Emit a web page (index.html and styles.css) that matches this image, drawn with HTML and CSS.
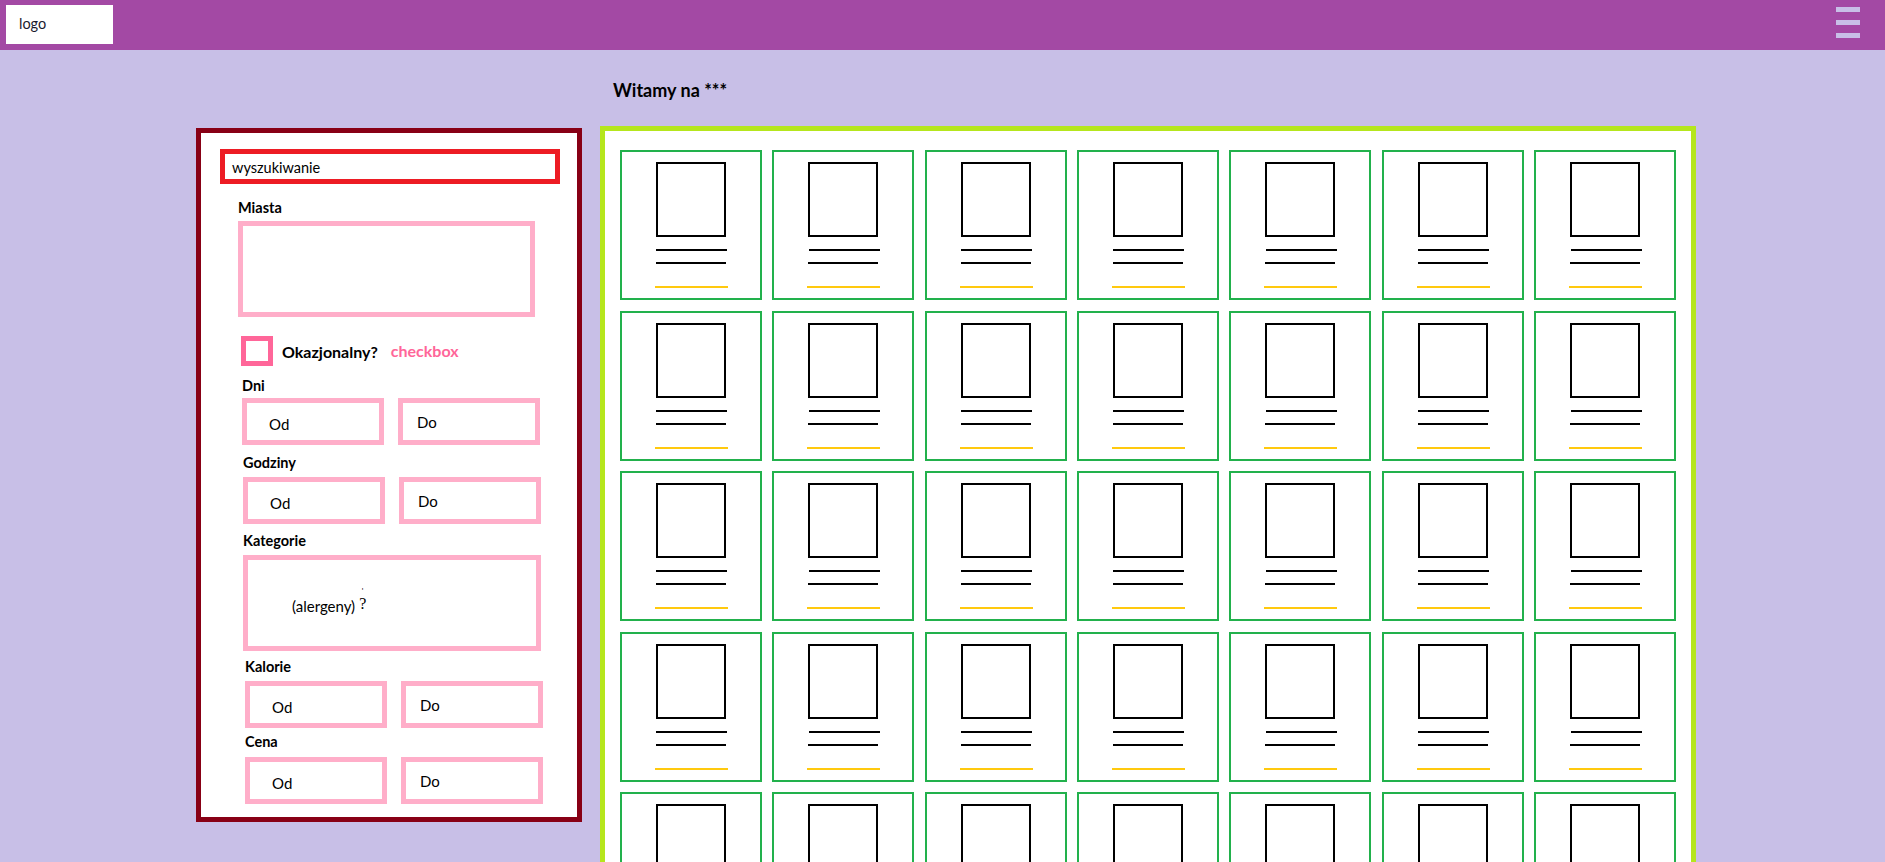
FILE: index.html
```html
<!DOCTYPE html>
<html lang="pl">
<head>
<meta charset="utf-8">
<title>Witamy na ***</title>
<link rel="stylesheet" href="styles.css">
</head>
<body>
<header class="topbar">
  <div class="logo">logo</div>
  <div class="burger"><span></span><span></span><span></span></div>
</header>
<div class="page">
  <aside class="sidebar">
    <div class="search">wyszukiwanie</div>

    <div class="field f-miasta">
      <div class="label">Miasta</div>
      <div class="bigbox"></div>
    </div>

    <div class="check-row">
      <div class="checkbox"></div>
      <span class="check-label">Okazjonalny?</span>
      <span class="check-note">checkbox</span>
    </div>

    <div class="field f-dni">
      <div class="label">Dni</div>
      <div class="pair"><div class="box od">Od</div><div class="box do">Do</div></div>
    </div>

    <div class="field f-godziny">
      <div class="label">Godziny</div>
      <div class="pair"><div class="box od">Od</div><div class="box do">Do</div></div>
    </div>

    <div class="field f-kategorie">
      <div class="label">Kategorie</div>
      <div class="bigbox kat"><span class="kat-text">(alergeny)</span><span class="q"><span class="tick">'</span>?</span></div>
    </div>

    <div class="field f-kalorie">
      <div class="label">Kalorie</div>
      <div class="pair"><div class="box od">Od</div><div class="box do">Do</div></div>
    </div>

    <div class="field f-cena">
      <div class="label">Cena</div>
      <div class="pair"><div class="box od">Od</div><div class="box do">Do</div></div>
    </div>
  </aside>

  <main class="main">
    <h1 class="title">Witamy na ***</h1>
    <section class="panel">
      <div class="grid">
        <div class="card"><div class="pic"></div><div class="ln l1"></div><div class="ln l2"></div><div class="ln price"></div></div>
        <div class="card"><div class="pic"></div><div class="ln l1"></div><div class="ln l2"></div><div class="ln price"></div></div>
        <div class="card"><div class="pic"></div><div class="ln l1"></div><div class="ln l2"></div><div class="ln price"></div></div>
        <div class="card"><div class="pic"></div><div class="ln l1"></div><div class="ln l2"></div><div class="ln price"></div></div>
        <div class="card"><div class="pic"></div><div class="ln l1"></div><div class="ln l2"></div><div class="ln price"></div></div>
        <div class="card"><div class="pic"></div><div class="ln l1"></div><div class="ln l2"></div><div class="ln price"></div></div>
        <div class="card"><div class="pic"></div><div class="ln l1"></div><div class="ln l2"></div><div class="ln price"></div></div>

        <div class="card"><div class="pic"></div><div class="ln l1"></div><div class="ln l2"></div><div class="ln price"></div></div>
        <div class="card"><div class="pic"></div><div class="ln l1"></div><div class="ln l2"></div><div class="ln price"></div></div>
        <div class="card"><div class="pic"></div><div class="ln l1"></div><div class="ln l2"></div><div class="ln price"></div></div>
        <div class="card"><div class="pic"></div><div class="ln l1"></div><div class="ln l2"></div><div class="ln price"></div></div>
        <div class="card"><div class="pic"></div><div class="ln l1"></div><div class="ln l2"></div><div class="ln price"></div></div>
        <div class="card"><div class="pic"></div><div class="ln l1"></div><div class="ln l2"></div><div class="ln price"></div></div>
        <div class="card"><div class="pic"></div><div class="ln l1"></div><div class="ln l2"></div><div class="ln price"></div></div>

        <div class="card"><div class="pic"></div><div class="ln l1"></div><div class="ln l2"></div><div class="ln price"></div></div>
        <div class="card"><div class="pic"></div><div class="ln l1"></div><div class="ln l2"></div><div class="ln price"></div></div>
        <div class="card"><div class="pic"></div><div class="ln l1"></div><div class="ln l2"></div><div class="ln price"></div></div>
        <div class="card"><div class="pic"></div><div class="ln l1"></div><div class="ln l2"></div><div class="ln price"></div></div>
        <div class="card"><div class="pic"></div><div class="ln l1"></div><div class="ln l2"></div><div class="ln price"></div></div>
        <div class="card"><div class="pic"></div><div class="ln l1"></div><div class="ln l2"></div><div class="ln price"></div></div>
        <div class="card"><div class="pic"></div><div class="ln l1"></div><div class="ln l2"></div><div class="ln price"></div></div>

        <div class="card"><div class="pic"></div><div class="ln l1"></div><div class="ln l2"></div><div class="ln price"></div></div>
        <div class="card"><div class="pic"></div><div class="ln l1"></div><div class="ln l2"></div><div class="ln price"></div></div>
        <div class="card"><div class="pic"></div><div class="ln l1"></div><div class="ln l2"></div><div class="ln price"></div></div>
        <div class="card"><div class="pic"></div><div class="ln l1"></div><div class="ln l2"></div><div class="ln price"></div></div>
        <div class="card"><div class="pic"></div><div class="ln l1"></div><div class="ln l2"></div><div class="ln price"></div></div>
        <div class="card"><div class="pic"></div><div class="ln l1"></div><div class="ln l2"></div><div class="ln price"></div></div>
        <div class="card"><div class="pic"></div><div class="ln l1"></div><div class="ln l2"></div><div class="ln price"></div></div>

        <div class="card"><div class="pic"></div><div class="ln l1"></div><div class="ln l2"></div><div class="ln price"></div></div>
        <div class="card"><div class="pic"></div><div class="ln l1"></div><div class="ln l2"></div><div class="ln price"></div></div>
        <div class="card"><div class="pic"></div><div class="ln l1"></div><div class="ln l2"></div><div class="ln price"></div></div>
        <div class="card"><div class="pic"></div><div class="ln l1"></div><div class="ln l2"></div><div class="ln price"></div></div>
        <div class="card"><div class="pic"></div><div class="ln l1"></div><div class="ln l2"></div><div class="ln price"></div></div>
        <div class="card"><div class="pic"></div><div class="ln l1"></div><div class="ln l2"></div><div class="ln price"></div></div>
        <div class="card"><div class="pic"></div><div class="ln l1"></div><div class="ln l2"></div><div class="ln price"></div></div>
      </div>
    </section>
  </main>
</div>
</body>
</html>
```

FILE: styles.css
```css
* { box-sizing: border-box; }

html, body {
  margin: 0;
  padding: 0;
  height: 100%;
  overflow: hidden;
}

body {
  background: #c8bfe7;
  font-family: Lato, "Open Sans", sans-serif;
  color: #000;
}

/* ---------- top bar ---------- */
.topbar {
  height: 50px;
  background: #a349a4;
  display: flex;
  align-items: flex-start;
  justify-content: space-between;
  padding: 5px 25px 0 6px;
}

.logo {
  width: 107px;
  height: 39px;
  background: #fff;
  font-size: 14.5px;
  line-height: 18px;
  padding: 10px 0 0 13px;
  color: #1a1a2e;
}

.burger {
  display: flex;
  flex-direction: column;
  gap: 8px;
  margin-top: 2px;
}
.burger span {
  display: block;
  width: 24px;
  height: 5px;
  background: #c8bfe7;
}

/* ---------- page layout ---------- */
.page {
  display: flex;
  align-items: flex-start;
  gap: 18px;
  padding-left: 196px;
}

/* ---------- sidebar ---------- */
.sidebar {
  width: 386px;
  height: 694px;
  margin-top: 78px;
  background: #fff;
  border: 5px solid #880015;
  padding: 16px 0 0 19px;
  flex: none;
}

.search {
  width: 340px;
  height: 35px;
  border: 5px solid #ed1c24;
  font-size: 14.5px;
  line-height: 22px;
  padding: 3px 0 0 7px;
}

.label {
  font-weight: 700;
  font-size: 14.5px;
  line-height: 18px;
}

.field { margin-left: 22px; }
.field .label { margin-bottom: 5px; }

.f-miasta { margin-left: 18px; margin-top: 15px; }
.f-miasta .label { margin-bottom: 4px; }
.f-dni { margin-top: 11px; }
.f-dni .label { margin-bottom: 3px; }
.f-godziny { margin-top: 9px; margin-left: 23px; }
.f-kategorie { margin-top: 8px; margin-left: 23px; }
.f-kalorie { margin-top: 7px; margin-left: 25px; }
.f-cena { margin-top: 5px; margin-left: 25px; }
.f-cena .label { margin-bottom: 6px; }

.bigbox {
  width: 297px;
  height: 96px;
  border: 5px solid #ffaec9;
}

.bigbox.kat {
  width: 298px;
  display: flex;
  align-items: center;
  padding: 6px 0 0 44px;
  font-size: 15px;
}
.kat-text { line-height: 18px; }
.q {
  font-family: "Liberation Serif", serif;
  font-size: 16px;
  margin-left: 4px;
  display: inline-flex;
  flex-direction: column;
  align-items: center;
  line-height: 14px;
  margin-top: -14px;
}
.tick {
  font-family: Lato, sans-serif;
  font-size: 8px;
  line-height: 8px;
  margin-bottom: 2px;
}

.check-row {
  display: flex;
  align-items: center;
  margin: 19px 0 0 21px;
  height: 30px;
}
.checkbox {
  width: 32px;
  height: 30px;
  border: 5px solid #ff6699;
  flex: none;
}
.check-label {
  font-weight: 700;
  font-size: 16px;
  line-height: 18px;
  margin-left: 9px;
  margin-top: 2px;
}
.check-note {
  font-weight: 700;
  font-size: 16px;
  line-height: 18px;
  color: #ff6699;
  margin-left: 13px;
}

.pair {
  display: flex;
  gap: 14px;
}
.box {
  width: 142px;
  height: 47px;
  border: 5px solid #ffaec9;
  font-size: 15px;
  line-height: 18px;
}
.box.od { padding: 12px 0 0 22px; }
.box.do { padding: 10px 0 0 14px; }

/* ---------- main ---------- */
.main {
  width: 1096px;
  flex: none;
  margin-top: 29px;
}

.title {
  margin: 0 0 25px 13px;
  font-size: 18px;
  line-height: 22px;
  font-weight: 700;
}

.panel {
  background: #fff;
  border: 5px solid #b5e61d;
  border-bottom: none;
  padding: 19px 15px 40px 15px;
}

.grid {
  display: grid;
  grid-template-columns: repeat(7, 1fr);
  column-gap: 10.5px;
  row-gap: 10.5px;
}

.card {
  height: 150px;
  border: 2px solid #22b14c;
  display: flex;
  flex-direction: column;
  align-items: center;
  padding-top: 10px;
}

.pic {
  width: 70px;
  height: 75px;
  border: 2px solid #000;
  flex: none;
}

.ln {
  height: 2px;
  flex: none;
}
.l1 { width: 71px; background: #000; margin-top: 12px; margin-left: 2px; }
.l2 { width: 70px; background: #000; margin-top: 11px; }
.price { width: 73px; background: #ffc90e; margin-top: 22px; margin-left: 1px; }
```
